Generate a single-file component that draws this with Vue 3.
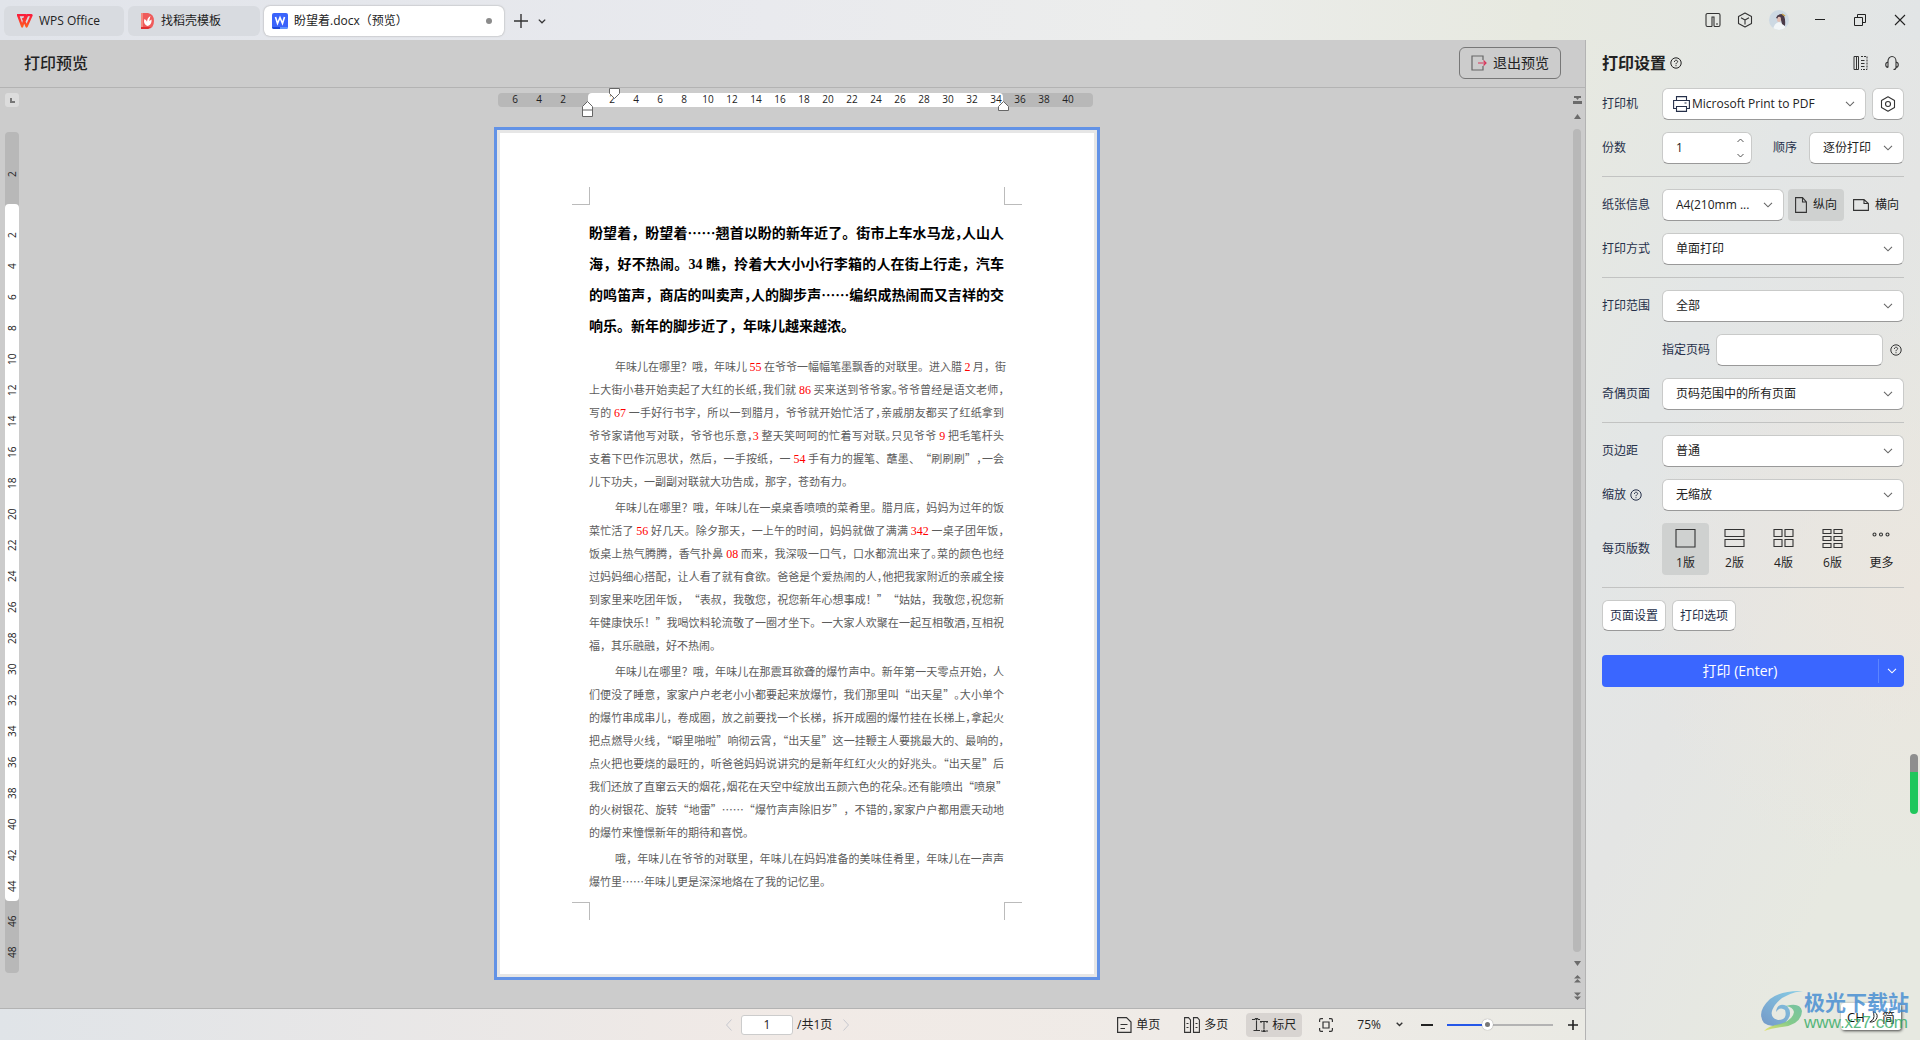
<script setup>
import { h, ref } from 'vue'

const Chevron = () =>
  h('svg', { class: 'chevron', viewBox: '0 0 10 6', width: 10, height: 6, 'aria-hidden': 'true' }, [
    h('path', { d: 'M1 .8 5 4.8 9 .8', fill: 'none', stroke: 'currentColor', 'stroke-width': 1.1 }),
  ])

const Help = () =>
  h('svg', { class: 'help', viewBox: '0 0 12 12', width: 12, height: 12, 'aria-hidden': 'true' }, [
    h('circle', { cx: 6, cy: 6, r: 5.2, fill: 'none', stroke: 'currentColor', 'stroke-width': 1 }),
    h('path', { d: 'M4.4 4.9C4.4 2.7 7.7 2.8 7.6 4.7 7.5 5.8 6 5.8 6 7.2M6 8.2V9.2', fill: 'none', stroke: 'currentColor', 'stroke-width': 1 }),
  ])

const copies = ref('1')
const pageNo = ref('1')
const pageRange = ref('')
const zoom = ref(37)

const range = (from, to) => Array.from({ length: (to - from) / 2 + 1 }, (_, i) => from + i * 2)
const rulerLeft = [6, 4, 2]
const rulerMid = range(2, 34)
const rulerRight = [36, 38, 40]
const vRulerMid = range(2, 44)

// trim: how many of a line's last commas and stops are set half width
const lead = [
  { t: '盼望着，盼望着……翘首以盼的新年近了。街市上车水马龙，人山人', trim: 1 },
  { t: '海，好不热闹。34 瞧，拎着大大小小行李箱的人在街上行走，汽车' },
  { t: '的鸣笛声，商店的叫卖声，人的脚步声……编织成热闹而又吉祥的交', trim: 1 },
  { t: '响乐。新年的脚步近了，年味儿越来越浓。' },
]

const body = [
  [
    { t: '年味儿在哪里？哦，年味儿 55 在爷爷一幅幅笔墨飘香的对联里。进入腊 2 月，街' },
    { t: '上大街小巷开始卖起了大红的长纸，我们就 86 买来送到爷爷家。爷爷曾经是语文老师，', trim: 3 },
    { t: '写的 67 一手好行书字，所以一到腊月，爷爷就开始忙活了，亲戚朋友都买了红纸拿到', trim: 1 },
    { t: '爷爷家请他写对联，爷爷也乐意，3 整天笑呵呵的忙着写对联。只见爷爷 9 把毛笔杆头', trim: 2 },
    { t: '支着下巴作沉思状，然后，一手按纸，一 54 手有力的握笔、蘸墨、“刷刷刷”，一会', trim: 1 },
    { t: '儿下功夫，一副副对联就大功告成，那字，苍劲有力。' },
  ],
  [
    { t: '年味儿在哪里？哦，年味儿在一桌桌香喷喷的菜肴里。腊月底，妈妈为过年的饭' },
    { t: '菜忙活了 56 好几天。除夕那天，一上午的时间，妈妈就做了满满 342 一桌子团年饭，', trim: 1 },
    { t: '饭桌上热气腾腾，香气扑鼻 08 而来，我深吸一口气，口水都流出来了。菜的颜色也经', trim: 1 },
    { t: '过妈妈细心搭配，让人看了就有食欲。爸爸是个爱热闹的人，他把我家附近的亲戚全接', trim: 1 },
    { t: '到家里来吃团年饭，“表叔，我敬您，祝您新年心想事成！”“姑姑，我敬您，祝您新', trim: 1 },
    { t: '年健康快乐！”我喝饮料轮流敬了一圈才坐下。一大家人欢聚在一起互相敬酒，互相祝', trim: 1 },
    { t: '福，其乐融融，好不热闹。' },
  ],
  [
    { t: '年味儿在哪里？哦，年味儿在那震耳欲聋的爆竹声中。新年第一天零点开始，人' },
    { t: '们便没了睡意，家家户户老老小小都要起来放爆竹，我们那里叫“出天星”。大小单个', trim: 1 },
    { t: '的爆竹串成串儿，卷成圈，放之前要找一个长梯，拆开成圈的爆竹挂在长梯上，拿起火', trim: 1 },
    { t: '把点燃导火线，“噼里啪啦”响彻云霄，“出天星”这一挂鞭主人要挑最大的、最响的，', trim: 3 },
    { t: '点火把也要烧的最旺的，听爸爸妈妈说讲究的是新年红红火火的好兆头。“出天星”后', trim: 1 },
    { t: '我们还放了直窜云天的烟花，烟花在天空中绽放出五颜六色的花朵。还有能喷出“喷泉”', trim: 2 },
    { t: '的火树银花、旋转“地雷”……“爆竹声声除旧岁”，不错的，家家户户都用震天动地', trim: 1 },
    { t: '的爆竹来憧憬新年的期待和喜悦。' },
  ],
  [
    { t: '哦，年味儿在爷爷的对联里，年味儿在妈妈准备的美味佳肴里，年味儿在一声声' },
    { t: '爆竹里……年味儿更是深深地烙在了我的记忆里。' },
  ],
]

const pieces = ({ t, trim = 0 }) => {
  const parts = t.split(/(\d+|[，。])/).filter(Boolean).map((s) => ({ s, kind: /^\d+$/.test(s) ? 'num' : '' }))
  parts.filter((p) => /^[，。]$/.test(p.s)).reverse().slice(0, trim).forEach((p) => { p.kind = 'half' })
  return parts
}

const layouts = [
  { name: '1版', d: 'M1 1.5H20V19H1Z', on: true },
  { name: '2版', d: 'M1 1.5H20V8.5H1ZM1 11.5H20V18.5H1Z' },
  { name: '4版', d: 'M1 1.5H9V8.5H1ZM12 1.5H20V8.5H12ZM1 11.5H9V18.5H1ZM12 11.5H20V18.5H12Z' },
  { name: '6版', d: 'M1 1.5H9V5.5H1ZM12 1.5H20V5.5H12ZM1 8.5H9V12.5H1ZM12 8.5H20V12.5H12ZM1 15.5H9V19.5H1ZM12 15.5H20V19.5H12Z' },
  { name: '更多', d: 'M2 6.5a1.5 1.5 0 1 0 3 0a1.5 1.5 0 1 0-3 0M8.500 6.500a1.5 1.5 0 1 0 3 0a1.5 1.5 0 1 0-3 0M15 6.500a1.5 1.5 0 1 0 3 0a1.5 1.5 0 1 0-3 0' },
]
</script>

<template>
  <div class="app" lang="zh-CN">
    <header class="titlebar">
      <nav class="tabs">
        <button class="tab home">
          <svg width="17" height="14" viewBox="0 0 17 14"><defs><linearGradient id="wps" x1="0" y1="0" x2="0" y2="1"><stop offset="0" stop-color="#fa1e3c" /><stop offset="1" stop-color="#ff5a1e" /></linearGradient></defs><path d="M1 1.200H9.500L6.200 12.500 2.200 1.500M6.800 4 10.600 12.500 15.600 1.200H11.200L8.500 7.500" fill="none" stroke="url(#wps)" stroke-width="2.200" stroke-linejoin="round" /></svg>
          <span>WPS Office</span>
        </button>
        <button class="tab docer">
          <svg width="15" height="16" viewBox="0 0 15 16"><path d="M1 0H8Q14 1 14 8T8 16H1Z" fill="#ef5b5b" /><path d="M1 0H3V16H1Z" fill="#f58a80" /><path d="M1 14H11L8 16H1Z" fill="#e02e30" /><path d="M7.500 13C3 11 4 7 4.500 6 6 7 7 8 7 9 7 6 8.500 4 10.500 3 10 5 9.500 6 9.300 8L11.500 6.500C12 10 10 12.500 7.500 13Z" fill="#fff" /></svg>
          <span>找稻壳模板</span>
        </button>
        <button class="tab doc">
          <svg width="16" height="16" viewBox="0 0 16 16"><rect width="16" height="16" rx="2" fill="#3a63fb" /><path d="M0 14H8V16H2Q0 16 0 14Z" fill="#1a45d8" /><path d="M8 14H16Q16 16 14 16H8Z" fill="#5f93ff" /><path d="M3.500 4 5.500 10.500 8 4.500 10.500 10.500 12.500 4" fill="none" stroke="#fff" stroke-width="1.600" /></svg>
          <span>盼望着.docx（预览）</span>
          <i class="dot"></i>
        </button>
        <button class="bare plus" aria-label="新建">
          <svg width="14" height="14" viewBox="0 0 14 14"><path d="M7 0V14M0 7H14" stroke="#333" stroke-width="1.400" /></svg>
        </button>
        <button class="bare" aria-label="标签列表">
          <svg width="8" height="5" viewBox="0 0 8 5"><path d="M.8.600 4 3.800 7.200.600" fill="none" stroke="#333" stroke-width="1.300" /></svg>
        </button>
      </nav>
      <div class="win">
        <div class="apps">
          <button class="bare" aria-label="分栏"><svg width="16" height="16" viewBox="0 0 16 16"><path d="M7 14.500H2.500A1.500 1.500 0 0 1 1 13V3A1.500 1.500 0 0 1 2.500 1.500H13.500A1.500 1.500 0 0 1 15 3V13A1.500 1.500 0 0 1 13.500 14.500H10A1 1 0 0 1 9 13.500V5H7V14.500M11 12H13" fill="none" stroke="#333" stroke-width="1.100" /></svg></button>
          <button class="bare" aria-label="应用"><svg width="16" height="16" viewBox="0 0 16 16"><path d="M8 1 14.500 4.500V11.500L8 15 1.500 11.500V4.500ZM4 5.800 8 8 12 5.800M8 8V12.500" fill="none" stroke="#333" stroke-width="1.100" stroke-linejoin="round" /></svg></button>
          <button class="bare" aria-label="账户"><svg width="20" height="20" viewBox="0 0 20 20"><defs><clipPath id="av"><circle cx="10" cy="10" r="10" /></clipPath></defs><g clip-path="url(#av)"><rect width="20" height="20" fill="#cdd9e3" /><path d="M4 20Q5 13 10 12L15 14 17 20Z" fill="#f2f6f8" /><path d="M7 8Q8 4 13 4 17 6 16 16L13 14 12 10Z" fill="#4a3a48" /><path d="M9 7Q12 6 12 9T10 12 8 10Z" fill="#e2bfb4" /><path d="M13 4 16 6" stroke="#c5a04c" stroke-width="1.500" /></g></svg></button>
        </div>
        <button class="bare" aria-label="最小化"><svg width="12" height="12" viewBox="0 0 12 12"><path d="M1 5.500H11" stroke="#222" /></svg></button>
        <button class="bare" aria-label="还原"><svg width="12" height="12" viewBox="0 0 12 12"><path d="M.5 3.500H8.500V11.500H.5ZM3.500 3.500V.5H11.500V8.500H8.500" fill="none" stroke="#222" /></svg></button>
        <button class="bare" aria-label="关闭"><svg width="12" height="12" viewBox="0 0 12 12"><path d="M1 1 11 11M11 1 1 11" stroke="#222" stroke-width="1.100" /></svg></button>
      </div>
    </header>

    <div class="columns">
      <main class="main">
        <div class="subhead">
          <h1>打印预览</h1>
          <button class="exit">
            <svg width="16" height="16" viewBox="0 0 16 16"><path d="M12 5V1H1V15H12V11" fill="none" stroke="#666" stroke-width="1.200" /><path d="M7 8H15M12.500 5.500 15 8 12.500 10.500" fill="none" stroke="#d8365a" stroke-width="1.200" /></svg>
            <span>退出预览</span>
          </button>
        </div>

        <div class="workspace">
          <div class="vcol">
            <button class="tabstop" aria-label="制表位"><i></i></button>
            <ol class="vruler">
              <li class="vseg top"><span>2</span></li>
              <li class="vseg mid"><div class="vnums"><span v-for="n in vRulerMid" :key="n">{{ n }}</span></div></li>
              <li class="vseg bottom"><span>46</span><span>48</span></li>
            </ol>
          </div>

          <div class="canvas">
            <div class="hruler">
              <div class="hseg left"><span v-for="n in rulerLeft" :key="n">{{ n }}</span></div>
              <div class="hseg mid"><span v-for="n in rulerMid" :key="n">{{ n }}</span></div>
              <div class="hseg right"><span v-for="n in rulerRight" :key="n">{{ n }}</span></div>
              <svg class="marker first" width="11" height="11" viewBox="0 0 11 11"><path d="M.5.500H10.500V5.500L5.500 10.500.5 5.500Z" fill="#fff" stroke="#666" /></svg>
              <svg class="marker hang" width="11" height="16" viewBox="0 0 11 16"><path d="M.5 9V5.500L5.500.500 10.500 5.500V9ZM.5 9V15.500H10.500V9" fill="#fff" stroke="#666" /></svg>
              <svg class="marker end" width="11" height="10" viewBox="0 0 11 10"><path d="M.5 9.500V5.500L5.500.500 10.500 5.500V9.500Z" fill="#fff" stroke="#666" /></svg>
            </div>

            <article class="page">
              <div class="crops"><i class="crop tl"></i><i class="crop tr"></i></div>
              <div class="text">
                <p class="lead">
                  <span v-for="(l, i) in lead" :key="i" class="line" :class="{ last: i === lead.length - 1 }"><span v-for="(p, k) in pieces(l)" :key="k" :class="p.kind">{{ p.s }}</span></span>
                </p>
                <p v-for="(para, j) in body" :key="j" class="para">
                  <span v-for="(l, i) in para" :key="i" class="line" :class="{ last: i === para.length - 1 }"><span v-for="(p, k) in pieces(l)" :key="k" :class="p.kind">{{ p.s }}</span></span>
                </p>
              </div>
              <div class="crops"><i class="crop bl"></i><i class="crop br"></i></div>
            </article>
          </div>

          <div class="scroll">
            <svg width="9" height="8" viewBox="0 0 9 8"><path d="M1 0H8V2H6L4.500 4 3 2H1ZM0 5H9V8H0Z" fill="#6b6b6b" /></svg>
            <svg class="up" width="7" height="5" viewBox="0 0 7 5"><path d="M3.500 0 7 5H0Z" fill="#6b6b6b" /></svg>
            <div class="thumb"></div>
            <svg width="7" height="5" viewBox="0 0 7 5"><path d="M3.500 5 7 0H0Z" fill="#6b6b6b" /></svg>
            <svg width="7" height="8" viewBox="0 0 7 8"><path d="M3.500 0 7 3.500H0ZM3.500 4 7 7.500H0Z" fill="#6b6b6b" /></svg>
            <svg width="7" height="8" viewBox="0 0 7 8"><path d="M3.500 4 7 .5H0ZM3.500 8 7 4.500H0Z" fill="#6b6b6b" /></svg>
          </div>
        </div>

        <footer class="status">
          <div class="pager">
            <button class="bare dim" aria-label="上一页"><svg width="6" height="12" viewBox="0 0 6 12"><path d="M5.500.500.5 6 5.500 11.500" fill="none" stroke="#c6c8ce" /></svg></button>
            <input v-model="pageNo" aria-label="页码" />
            <span class="total">/共1页</span>
            <button class="bare dim" aria-label="下一页"><svg width="6" height="12" viewBox="0 0 6 12"><path d="M.5.500 5.500 6 .5 11.500" fill="none" stroke="#c6c8ce" /></svg></button>
          </div>
          <div class="views">
            <button class="view"><svg width="15" height="16" viewBox="0 0 15 16"><path d="M.6.600H9.500L14 5V15.400H.6ZM3.500 7.500H10.500M3.500 11.500H8" fill="none" stroke="#333" stroke-width="1.200" /></svg><span>单页</span></button>
            <button class="view"><svg width="16" height="16" viewBox="0 0 16 16"><path d="M.6.600H4.500L6.500 3V15.400H.6ZM9.500.600H13.400L15.400 3V15.400H9.500ZM2.500 6.500H4.500M2.500 10.500H4.500M11.500 6.500H13.500M11.500 10.500H13.500" fill="none" stroke="#333" stroke-width="1.100" /></svg><span>多页</span></button>
            <button class="view on"><svg width="16" height="16" viewBox="0 0 16 16"><path d="M0 2.500H3M6 2.500H8M4.500 4V13.500M1.500 13.500H8M8 4.500H16M12 4.500V12M9 4.500V6M15 4.500V6M9 14H10.500M13.500 14H16" fill="none" stroke="#333" stroke-width="1.100" /><path d="M2.500 1H6.500L4.500 4ZM10 15H14L12 12Z" fill="#333" /></svg><span>标尺</span></button>
            <button class="bare fit" aria-label="适应窗口"><svg width="14" height="14" viewBox="0 0 14 14"><path d="M4 .6H2A1.500 1.500 0 0 0 .6 2V4M10 .6H12A1.500 1.500 0 0 1 13.400 2V4M.6 10V12A1.500 1.500 0 0 0 2 13.400H4M13.400 10V12A1.500 1.500 0 0 1 12 13.400H10M4 4H10V10H4Z" fill="none" stroke="#333" stroke-width="1.200" /></svg></button>
            <button class="bare percent"><span>75%</span><svg width="7" height="5" viewBox="0 0 7 5"><path d="M.7.700 3.500 3.500 6.300.700" fill="none" stroke="#333" stroke-width="1.400" /></svg></button>
            <button class="bare" aria-label="缩小"><svg width="12" height="12" viewBox="0 0 12 12"><path d="M0 6H12" stroke="#222" stroke-width="2" /></svg></button>
            <input v-model="zoom" class="slider" type="range" min="0" max="100" aria-label="缩放比例" />
            <button class="bare" aria-label="放大"><svg width="10" height="10" viewBox="0 0 10 10"><path d="M0 5H10M5 0V10" stroke="#222" stroke-width="1.600" /></svg></button>
          </div>
        </footer>
      </main>

      <aside class="panel">
        <div class="phead">
          <h2>打印设置</h2>
          <Help />
          <svg class="push" width="15" height="16" viewBox="0 0 15 16"><path d="M5.500 1.500V14.500H1V1.500ZM3.500 1.500V14.500" fill="none" stroke="#333" /><path d="M8 1.500H14V14.500H8" fill="none" stroke="#333" stroke-dasharray="2 1" /><path d="M8 5.500H11.500M8 8.500H11.500M8 11.500H11.500" stroke="#333" /></svg>
          <svg width="16" height="16" viewBox="0 0 16 16"><path d="M4 12.500V6A4 4.500 0 0 1 12 6V12.500M4 7A2.800 2.800 0 0 0 4 12.500M12 7A2.800 2.800 0 0 1 12 12.500Q12 14.500 9.500 14.500" fill="none" stroke="#333" stroke-width="1.100" /></svg>
        </div>

        <div class="row">
          <label for="printer">打印机</label>
          <div class="select printer">
            <svg class="picon" width="17" height="16" viewBox="0 0 17 16"><path d="M3.500 4.500V.6H13.500V4.500M3.500 12.500H.6V4.500H16.400V12.500H13.500M3.500 10.500H13.500V15.400H3.500ZM11.500 7H13.500" fill="none" stroke="#26304a" stroke-width="1.100" /></svg>
            <select id="printer"><option>Microsoft Print to PDF</option></select><Chevron />
          </div>
          <button class="box gear" aria-label="打印机属性"><svg width="16" height="16" viewBox="0 0 16 16"><path d="M8 .8 14.500 4.400V11.600L8 15.200 1.500 11.600V4.400Z" fill="none" stroke="#333" stroke-width="1.100" stroke-linejoin="round" /><circle cx="8" cy="8" r="2.500" fill="none" stroke="#333" stroke-width="1.100" /></svg></button>
        </div>
        <div class="row">
          <label for="copies">份数</label>
          <div class="select spin">
            <input id="copies" v-model="copies" />
            <span class="steps"><button class="bare" aria-label="增加"><svg width="7" height="5" viewBox="0 0 7 5"><path d="M.5 4 3.500 1 6.500 4" fill="none" stroke="#555" /></svg></button><button class="bare" aria-label="减少"><svg width="7" height="5" viewBox="0 0 7 5"><path d="M.5 1 3.500 4 6.500 1" fill="none" stroke="#555" /></svg></button></span>
          </div>
          <label class="order" for="order">顺序</label>
          <div class="select collate"><select id="order"><option>逐份打印</option></select><Chevron /></div>
        </div>
        <hr />
        <div class="row">
          <label for="paper">纸张信息</label>
          <div class="select paper"><select id="paper"><option>A4(210mm ...</option></select><Chevron /></div>
          <button class="orient on"><svg width="12" height="16" viewBox="0 0 12 16"><path d="M.6.600H7.500L11.400 5V15.400H.6ZM7.500.600V5H11.400" fill="none" stroke="#333" stroke-width="1.100" /></svg><span>纵向</span></button>
          <button class="orient"><svg width="16" height="12" viewBox="0 0 16 12"><path d="M.6.600H11L15.400 4.500V11.400H.6ZM11 .6V4.500H15.400" fill="none" stroke="#333" stroke-width="1.100" /></svg><span>横向</span></button>
        </div>
        <div class="row">
          <label for="mode">打印方式</label>
          <div class="select"><select id="mode"><option>单面打印</option></select><Chevron /></div>
        </div>
        <hr />
        <div class="row">
          <label for="scope">打印范围</label>
          <div class="select"><select id="scope"><option>全部</option></select><Chevron /></div>
        </div>
        <div class="row sub">
          <label for="pages">指定页码</label>
          <input id="pages" v-model="pageRange" class="box pages" />
          <Help />
        </div>
        <div class="row">
          <label for="parity">奇偶页面</label>
          <div class="select"><select id="parity"><option>页码范围中的所有页面</option></select><Chevron /></div>
        </div>
        <hr />
        <div class="row">
          <label for="margin">页边距</label>
          <div class="select"><select id="margin"><option>普通</option></select><Chevron /></div>
        </div>
        <div class="row">
          <label for="scale">缩放 <Help /></label>
          <div class="select"><select id="scale"><option>无缩放</option></select><Chevron /></div>
        </div>
        <div class="row tall">
          <span class="label">每页版数</span>
          <div class="layouts">
            <button v-for="l in layouts" :key="l.name" class="layout" :class="{ on: l.on }">
              <svg width="21" height="21" viewBox="0 0 21 21"><path :d="l.d" fill="none" stroke="#333" stroke-width="1.100" /></svg>
              <span>{{ l.name }}</span>
            </button>
          </div>
        </div>
        <hr />
        <div class="extras"><button class="box wide">页面设置</button><button class="box wide">打印选项</button></div>
        <div class="print"><button class="go">打印 (Enter)</button><button class="more" aria-label="更多打印方式"><Chevron /></button></div>
      </aside>
    </div>

    <div class="gauge"></div>
    <div class="ime">CH <svg width="9" height="12" viewBox="0 0 9 12"><path d="M4 .6Q9 2 8 6.500 6.500 11.500.8 11 5.500 8.500 5 5.500 5 2.500 4 .6Z" fill="none" stroke="#222" /></svg> 简</div>
    <div class="mark">
      <svg width="44" height="42" viewBox="0 0 44 42"><defs><linearGradient id="mb" x1="0" y1="1" x2="1" y2="0"><stop offset="0" stop-color="#3f74bd" /><stop offset="1" stop-color="#5cc3ea" /></linearGradient><linearGradient id="mg" x1="0" y1="1" x2="1" y2="0"><stop offset="0" stop-color="#e8e23c" /><stop offset=".5" stop-color="#5dbf6a" /><stop offset="1" stop-color="#4cb58c" /></linearGradient></defs><path d="M43 1Q24 3 15 15 7 27 18 30 28 30 25 20 20 16 16 22 17 12 27 16 34 24 25 33 12 39 4 33-4 22 10 9 22 0 43 1Z" fill="url(#mb)" opacity=".85" /><path d="M26 16Q40 12 42 21 41 35 22 37 12 38 4 41 8 36 20 34 33 30 34 22 33 17 26 16Z" fill="url(#mg)" opacity=".9" /></svg>
      <div><strong>极光下载站</strong><span>www.xz7.com</span></div>
    </div>
  </div>
</template>

<style>
body { margin: 0; }
</style>

<style scoped>
.app {
  position: relative;
  display: flex;
  flex-direction: column;
  min-height: 100vh;
  font: 12px/16px "Open Sans", "Noto Sans CJK SC", sans-serif;
  color: #222;
  background: linear-gradient(90deg, #e1e4ea 0, #e9eaee 40%, #ecedec 60%, #e7e9e0 80%, #e2e5e6 100%);
}
* { box-sizing: border-box; }
button, input, select { font: inherit; color: inherit; margin: 0; padding: 0; border: 0; background: none; }
button { display: flex; align-items: center; justify-content: center; white-space: nowrap; }
svg { display: block; flex: none; }
h1, h2, p, ol { margin: 0; padding: 0; }

.titlebar { display: flex; justify-content: space-between; height: 40px; padding: 0 14px 0 4px; }
.tabs { display: flex; align-items: center; gap: 4px; padding-top: 2px; }
.tab { height: 30px; justify-content: flex-start; gap: 6px; border-radius: 6px; background: #d8dbe0; padding: 0 12px; }
.home { width: 120px; }
.docer { width: 132px; }
.doc { width: 240px; padding: 0 12px 0 8px; background: #fff; box-shadow: 0 0 2px #999; }
.dot { width: 6px; height: 6px; margin-left: auto; border-radius: 50%; background: #8b8b8b; }
.plus { margin: 0 6px; }
.win { display: flex; align-items: center; gap: 28px; }
.apps { display: flex; align-items: center; gap: 16px; margin-right: -3px; }

.columns { flex: 1; display: flex; min-height: 0; }
.main { flex: 1; min-width: 0; display: flex; flex-direction: column; border-right: 1px solid #b3b3b3; background: #ccc; }
.subhead { display: flex; align-items: center; justify-content: space-between; height: 48px; padding: 0 24px 2px; border-bottom: 1px solid #b3b3b3; }
h1, h2 { font-size: 16px; line-height: 24px; font-weight: 500; }
.exit { width: 102px; height: 32px; gap: 6px; border: 1px solid #777; border-radius: 6px; font-size: 14px; }

.workspace { flex: 1; display: grid; grid-template-columns: 25px 1fr 16px; }
.vcol { padding: 5px 0 20px 5px; }
.tabstop { width: 14px; height: 14px; border-radius: 3px; background: #dcdcdc; }
.tabstop i { width: 5px; height: 5px; border: solid #777; border-width: 0 0 2px 2px; }
.vruler { width: 14px; margin-top: 25px; border-radius: 4px; background: #b8b8b8; list-style: none; font-size: 10px; line-height: 14px; }
.vseg { display: flex; flex-direction: column; }
.vseg span { writing-mode: vertical-rl; transform: rotate(180deg); width: 14px; height: 31px; text-align: center; }
.vseg.top { height: 72px; padding-top: 27px; }
.vseg.mid { height: 697px; padding-top: 16px; border-radius: 4px; background: #fff; }
.vnums { display: flex; flex-direction: column; }
.vseg.bottom { height: 72px; padding-top: 5px; }

.canvas { display: flex; flex-direction: column; align-items: center; padding-bottom: 20px; }
.hruler { position: relative; display: flex; width: 595px; height: 14px; margin: 5px 7px 20px 4px; border-radius: 4px; background: #b8b8b8; font-size: 10px; line-height: 13px; }
.hseg { display: flex; }
.hseg span { width: 24px; text-align: center; }
.hseg.left { width: 90px; padding-left: 5px; }
.hseg.mid { width: 415px; padding-left: 12px; border-radius: 4px; background: #fff; }
.hseg.mid span { flex: none; }
.hseg.right { padding-left: 5px; }
.marker { position: absolute; }
.first { left: 111px; top: -5px; }
.hang { left: 84px; top: 8px; }
.end { left: 500px; top: 8px; }

.page { width: 606px; min-height: 853px; padding: 57px 75px 50px; border: 3px solid #6292e6; background: #fff; box-shadow: inset 0 0 0 3px #e6e6e6; }
.crops { display: flex; justify-content: space-between; height: 18px; }
.crop { width: 18px; border: 0 solid #bbb; }
.tl { border-width: 0 1px 1px 0; }
.tr { border-width: 0 0 1px 1px; }
.bl { border-width: 1px 1px 0 0; }
.br { border-width: 1px 0 0 1px; }
.text { margin: 0 18px 0 17px; padding-top: 12px; font-family: "Noto Sans CJK SC", sans-serif; min-height: 697px; text-spacing-trim: space-all; }
.line { display: block; white-space: nowrap; text-align: justify; text-align-last: justify; }
.line.last { text-align-last: left; }
.half { font-feature-settings: "halt"; }
.lead { margin-bottom: 14px; font-size: 14px; line-height: 31px; font-weight: 700; color: #000; }
.num { font-family: "Liberation Serif", serif; line-height: 0; }
.para { margin-bottom: 3px; font-size: 11px; line-height: 23px; color: #5c5c5c; }
.para .num { color: #f00; font-size: 12px; }
.para .line:first-child { padding-left: 26px; }

.scroll { display: flex; flex-direction: column; align-items: center; gap: 9px; padding: 8px 0; }
.up { margin: 1px 0; }
.thumb { flex: 1; width: 8px; border-radius: 4px; background: #b8b8b8; }

.status { display: flex; align-items: center; justify-content: space-between; height: 32px; padding: 0 7px 0 726px; border-top: 1px solid #b3b3b3; background: linear-gradient(90deg, #e0e4e8, #f1eae6 50%, #efebe7 75%, #eaeae4); }
.pager { display: flex; align-items: center; gap: 4px; }
.pager input { width: 52px; height: 20px; margin-left: 5px; border: 1px solid #ccc; border-radius: 3px; background: #fff; text-align: center; }
.total { width: 42px; }
.views { display: flex; align-items: center; }
.view { height: 24px; gap: 4px; padding: 0 6px; border-radius: 4px; margin-right: 12px; }
.view.on { background: #d8d4d1; margin-right: 17px; }
.fit { margin-right: 24px; }
.percent { gap: 15px; margin-right: 18px; }
.slider { appearance: none; width: 106px; height: 16px; margin: 0 15px 0 14px; background: linear-gradient(90deg, #2457e8 37%, #b3b3b3 37%) center / 100% 2px no-repeat; }
.slider::-webkit-slider-thumb { appearance: none; width: 11px; height: 11px; border: 3px solid #fff; border-radius: 50%; background: #777; box-shadow: 0 0 1px #777; }

.panel { width: 334px; padding: 0 16px; color: #222; background: radial-gradient(circle at 100% 55%, #ebe6df 0, rgba(232, 228, 226, 0) 45%), linear-gradient(115deg, #e7e9e1 0, #e3e6e6 30%, #e4e5e4 50%, #e7e9e1 80%); }
.phead { display: flex; align-items: center; gap: 4px; height: 48px; padding: 0 4px 2px 0; }
h2 { font-weight: 700; }
.push { margin: 0 12px 0 auto; }
.row { display: flex; align-items: center; height: 32px; margin-bottom: 12px; }
.row label:first-child, .label { flex: none; width: 60px; display: flex; align-items: center; gap: 4px; color: #26304a; }
.select { position: relative; flex: 1; display: flex; align-items: center; height: 32px; border: 1px solid #c9cac9; border-bottom-color: #999; border-radius: 6px; background: #fff; }
.select select { appearance: none; width: 100%; height: 30px; padding-left: 13px; outline: 0; }
.select .chevron { position: absolute; right: 10px; color: #666; pointer-events: none; }
.picon { position: absolute; left: 10px; }
.printer select { padding-left: 29px; }
.box { border: 1px solid #c9cac9; border-bottom-color: #999; border-radius: 6px; background: #fff; }
.gear { width: 32px; height: 32px; margin-left: 6px; }
.spin { flex: none; width: 90px; }
.spin input { width: 60px; padding-left: 13px; }
.steps { display: flex; flex-direction: column; gap: 10px; margin-left: auto; padding-right: 7px; }
.row .order { margin: 0 12px 0 21px; color: #26304a; }
.paper { flex: none; width: 122px; margin-right: 4px; }
.orient { width: 56px; height: 32px; gap: 6px; border-radius: 4px; }
.orient.on { margin-right: 4px; background: #cfd1d0; }
.sub { padding-left: 60px; }
.row.sub label { width: 54px; }
.pages { flex: 1; min-width: 0; height: 32px; margin-right: 7px; }
.sub .help { margin-right: 2px; color: #333; }
.row.tall { height: 52px; }
.layouts { flex: 1; display: flex; gap: 2px; }
.layout { width: 47px; height: 52px; flex-direction: column; gap: 6px; border-radius: 4px; }
.layout.on { background: #cfd1d0; }
hr { height: 1px; margin: 0 0 12px; border: 0; background: #c2c3c2; }
.extras { display: flex; gap: 6px; margin-bottom: 24px; }
.wide { width: 64px; height: 31px; color: #26304a; }
.print { display: flex; align-items: center; height: 32px; border-radius: 4px; background: #3a66ff; color: #fff; }
.go { flex: 1; height: 32px; font-size: 14px; }
.more { width: 26px; height: 24px; border-left: 1px solid #5c85ff; }

.gauge { position: absolute; right: 2px; top: 754px; width: 8px; height: 60px; border-radius: 4px; background: linear-gradient(#8e8e8e 30%, #1fc75c 30%); }
.ime { position: absolute; right: 19px; bottom: 10px; display: flex; align-items: center; justify-content: center; gap: 4px; width: 60px; height: 27px; border-radius: 3px; background: #fff; box-shadow: 1px 1px 3px #444; font-size: 13px; color: #111; }
.mark { position: absolute; right: 9px; bottom: 8px; display: flex; opacity: .8; }
.mark div { display: flex; flex-direction: column; width: 107px; }
.mark strong { font-size: 21px; line-height: 24px; font-weight: 700; color: #3f8ad2; }
.mark span { font: 17px/18px "Liberation Sans", sans-serif; color: #2fa962; }
</style>
